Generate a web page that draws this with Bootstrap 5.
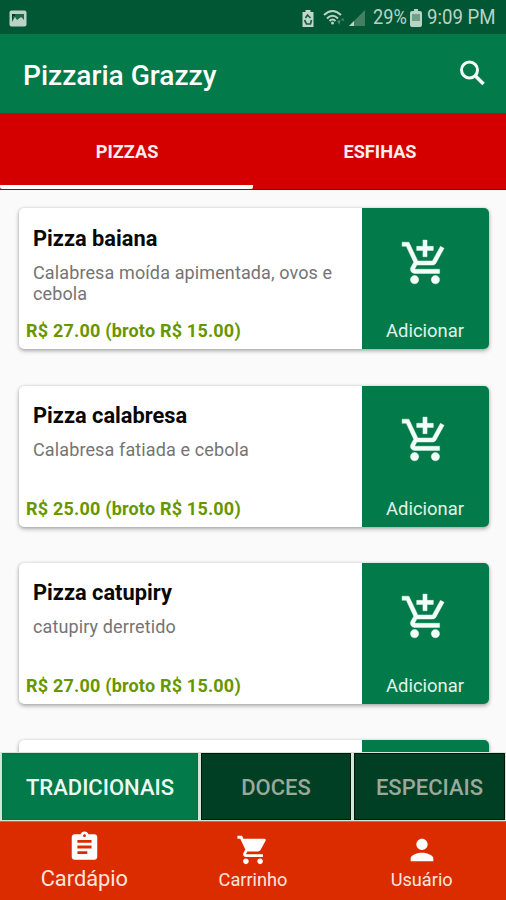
<!DOCTYPE html>
<html lang="pt-BR">
<head>
<meta charset="utf-8">
<meta name="viewport" content="width=device-width, initial-scale=1">
<title>Pizzaria Grazzy</title>
<link href="https://cdn.jsdelivr.net/npm/bootstrap@5.3.0/dist/css/bootstrap.min.css" rel="stylesheet">
<style>
  :root { --green: #037a49; --mint: #b9d3c6; }
  body { font-family: Roboto, "Liberation Sans", sans-serif; background: #fafafa; height: 900px; }
  svg { display: block; flex: none; }
  .app-screen { width: 506px; height: 900px; }
  .status-bar { height: 34px; background: #015634; color: var(--mint); padding: 2px 10px 0 9px; }
  .status-text { font-size: 19.6px; line-height: 34px; transform-origin: left; white-space: nowrap; }
  .status-text.pct { width: 37px; transform: scaleX(.93); }
  .status-text.clock { width: 69px; transform: scaleX(.95); }
  .signal { margin-right: 7px; }
  .battery { margin-right: 5px; }
  .app-bar { height: 79px; background: var(--green); padding: 3px 17px 0 23px; }
  .app-title { font-size: 28.1px; font-weight: 500; line-height: 32px; padding-top: 1px; }
  .search-icon { margin-top: -2px; }
  .top-tabs { height: 77px; background: #d40000; border-top: 1px solid #8e2409; border-bottom: 1px solid #a00000; }
  .top-tab { font-size: 18.200px; font-weight: 700; color: #ffeceb; border-bottom: 4px solid transparent; padding: 5px 0 0 1px; }
  .top-tab.active { border-bottom-color: #fff; border-radius: 0 0 2px 2px; }
  .menu-list { padding: 18.400px 17.500px 0 18.500px; gap: 36.2px; }
  .pizza-card { height: 141px; flex: none; border-radius: 5px; box-shadow: 0 2px 4px rgba(0,0,0,.3), 0 0 3px rgba(0,0,0,.14); }
  .pizza-info { padding: 17.5px 0 0 14.5px; }
  .pizza-name { font-size: 21.8px; font-weight: 700; line-height: 26px; color: #080808; }
  .pizza-desc { font-size: 18px; line-height: 21px; color: #747474; margin-top: 10px; letter-spacing: .12px; }
  .pizza-price { font-size: 18px; font-weight: 700; line-height: 22px; color: #679600; margin: 0 0 7px -7px; letter-spacing: .2px; }
  .add-button { width: 127px; background: var(--green); color: #e2f3e9; border-radius: 0 5px 5px 0; padding: 29.500px 0 7px; font-size: 18.4px; line-height: 22px; }
  .category-bar { height: 69px; gap: 3px; padding: 1px 1px 1px 2px; background: #d4e5da; }
  .category { font-size: 22px; font-weight: 500; background: #003f23; color: #9aa99c; border: 1px solid #00160b; padding-top: 2px; }
  .category.active { background: var(--green); color: #ecfaf1; border-color: #037143; }
  .bottom-nav { height: 79px; background: #db2c00; border-top: 1px solid #bd6e4a; color: #ffe5dc; }
  .nav-entry { font-size: 18.2px; line-height: 22px; padding-top: 11px; gap: 2px; }
  .nav-entry.active { font-size: 21.8px; padding-top: 8px; gap: 2px; line-height: 26px; }
</style>
</head>
<body>
<svg class="d-none" xmlns="http://www.w3.org/2000/svg">
  <symbol id="add-cart" viewBox="0 0 24 24"><path fill="#f3fff9" stroke="#f3fff9" stroke-width=".2" d="M11 9h2V6h3V4h-3V1h-2v3H8v2h3v3zm-4 9c-1.100 0-1.990.9-1.990 2S5.900 22 7 22s2-.9 2-2-.9-2-2-2zm10 0c-1.100 0-1.990.9-1.990 2s.89 2 1.990 2 2-.9 2-2-.9-2-2-2zm-9.830-3.250.03-.12.9-1.630h7.450c.75 0 1.410-.41 1.750-1.030l3.860-7.010L19.420 4h-.01l-1.100 2-2.760 5H8.530l-.13-.27L6.160 6l-.95-2-.94-2H1v2h2l3.600 7.590-1.350 2.450c-.16.28-.25.61-.25.960 0 1.100.9 2 2 2h12v-2H7.420c-.13 0-.25-.11-.25-.25z"/></symbol>
</svg>
<div class="app-screen d-flex flex-column overflow-hidden mx-auto">
  <div class="status-bar d-flex align-items-center flex-shrink-0">
    <svg class="me-auto" width="18" height="17" viewBox="0 0 18 17"><rect x=".5" y=".5" width="17" height="16" rx="2" fill="#b9d3c6"/><path d="M3 12V4h12v6l-3-3-4 3-2-3z" fill="#236846"/><path d="M3 4h3v2H4v3H3z" fill="#023f26"/><path d="m4 13 4-3 2 1 3-3 3 4v2H4z" fill="#b9d3c6"/></svg>
    <svg width="14" height="19" viewBox="0 0 13 19"><path d="M4 1h5v2h3v15H1V3h3z" fill="#bfd8cb"/><path d="m4 9 2-3 3 3M3 11l2 4h4l1-4" fill="none" stroke="#175e3d" stroke-width="1.700"/></svg>
    <svg class="ms-2" width="22" height="18" viewBox="0 0 22 18"><g fill="none" stroke="#b9d3c6" stroke-width="2"><path d="M1 6q8.500-8 17 0M4 9.500q5.500-5.500 11 0M6.500 12q3-3 6 0"/></g><circle cx="9.500" cy="14" r="1.500" fill="#b9d3c6"/><path d="m14 12 2.500 4 1-5zm4-1 2-2 1.500 3z" fill="#4c8b6c"/></svg>
    <svg class="signal ms-1" width="17" height="18" viewBox="0 0 17 18"><path d="M0 17 16 1v16z" fill="#438063"/><path d="M0 17 5 12v5z" fill="#b9d3c6"/></svg>
    <div class="status-text pct">29%</div>
    <svg class="battery" width="12" height="18" viewBox="0 0 12 18"><path d="M4 0h4v2h2q2 0 2 2v12q0 2-2 2H2q-2 0-2-2V4q0-2 2-2h2z" fill="#b9d3c6"/><path d="M2 5h8v7H2z" fill="#6da086"/></svg>
    <div class="status-text clock">9:09 PM</div>
  </div>
  <header class="app-bar d-flex align-items-center justify-content-between flex-shrink-0 text-white">
    <h1 class="app-title m-0">Pizzaria Grazzy</h1>
    <svg class="search-icon" width="30" height="30" viewBox="0 0 30 30" fill="none" stroke="#f3fff9"><circle cx="10.500" cy="11" r="8" stroke-width="3"/><path d="m16 16.500 8.500 8.500" stroke-width="3.600"/></svg>
  </header>
  <nav class="top-tabs d-flex flex-shrink-0">
    <div class="top-tab active w-50 d-flex align-items-center justify-content-center">PIZZAS</div>
    <div class="top-tab w-50 d-flex align-items-center justify-content-center">ESFIHAS</div>
  </nav>
  <main class="menu-list d-flex flex-column flex-grow-1 overflow-hidden">
    <article class="pizza-card d-flex bg-white">
      <div class="pizza-info d-flex flex-column flex-grow-1"><h2 class="pizza-name m-0">Pizza baiana</h2><div class="pizza-desc">Calabresa moída apimentada, ovos e<br>cebola</div><div class="pizza-price mt-auto">R$ 27.00 (broto R$ 15.00)</div></div>
      <div class="add-button d-flex flex-column align-items-center justify-content-between"><svg width="50" height="50"><use href="#add-cart"/></svg>Adicionar</div>
    </article>
    <article class="pizza-card d-flex bg-white">
      <div class="pizza-info d-flex flex-column flex-grow-1"><h2 class="pizza-name m-0">Pizza calabresa</h2><div class="pizza-desc">Calabresa fatiada e cebola</div><div class="pizza-price mt-auto">R$ 25.00 (broto R$ 15.00)</div></div>
      <div class="add-button d-flex flex-column align-items-center justify-content-between"><svg width="50" height="50"><use href="#add-cart"/></svg>Adicionar</div>
    </article>
    <article class="pizza-card d-flex bg-white">
      <div class="pizza-info d-flex flex-column flex-grow-1"><h2 class="pizza-name m-0">Pizza catupiry</h2><div class="pizza-desc">catupiry derretido</div><div class="pizza-price mt-auto">R$ 27.00 (broto R$ 15.00)</div></div>
      <div class="add-button d-flex flex-column align-items-center justify-content-between"><svg width="50" height="50"><use href="#add-cart"/></svg>Adicionar</div>
    </article>
    <article class="pizza-card d-flex bg-white"><div class="flex-grow-1"></div><div class="add-button"></div></article>
  </main>
  <div class="category-bar d-flex flex-shrink-0">
    <div class="category active d-flex align-items-center justify-content-center" style="width:196px">TRADICIONAIS</div>
    <div class="category d-flex align-items-center justify-content-center" style="width:150px">DOCES</div>
    <div class="category d-flex align-items-center justify-content-center flex-grow-1">ESPECIAIS</div>
  </div>
  <nav class="bottom-nav row g-0 flex-shrink-0">
    <div class="nav-entry active col d-flex flex-column align-items-center"><svg width="35" height="34" viewBox="0 0 24 24"><path fill="#fff" d="M19 3h-4.180C14.400 1.840 13.300 1 12 1c-1.300 0-2.400.84-2.820 2H5c-1.100 0-2 .9-2 2v14c0 1.100.9 2 2 2h14c1.100 0 2-.9 2-2V5c0-1.100-.9-2-2-2zm-7 0c.55 0 1 .45 1 1s-.45 1-1 1-1-.45-1-1 .45-1 1-1zm2 14H7v-2h7v2zm3-4H7v-2h10v2zm0-4H7V7h10v2z"/></svg>Cardápio</div>
    <div class="nav-entry col d-flex flex-column align-items-center"><svg width="34" height="34" viewBox="0 0 24 24"><path fill="#fff" d="M7 18c-1.100 0-1.990.9-1.990 2S5.900 22 7 22s2-.9 2-2-.9-2-2-2zM1 2v2h2l3.600 7.590-1.350 2.450c-.16.28-.25.61-.25.960 0 1.100.9 2 2 2h12v-2H7.420c-.14 0-.25-.11-.25-.25l.03-.12.9-1.630h7.450c.75 0 1.410-.41 1.750-1.030l3.580-6.490A1 1 0 0 0 20 4H5.210l-.94-2H1zm16 16c-1.100 0-1.990.9-1.990 2s.89 2 1.990 2 2-.9 2-2-.9-2-2-2z"/></svg>Carrinho</div>
    <div class="nav-entry col d-flex flex-column align-items-center"><svg width="36" height="34" viewBox="0 0 24 24"><path fill="#fff" d="M12 12c2.210 0 4-1.790 4-4s-1.790-4-4-4-4 1.790-4 4 1.790 4 4 4zm0 2c-2.670 0-8 1.340-8 4v2h16v-2c0-2.660-5.330-4-8-4z"/></svg>Usuário</div>
  </nav>
</div>
<script src="https://cdn.jsdelivr.net/npm/bootstrap@5.3.0/dist/js/bootstrap.bundle.min.js"></script>
</body>
</html>
